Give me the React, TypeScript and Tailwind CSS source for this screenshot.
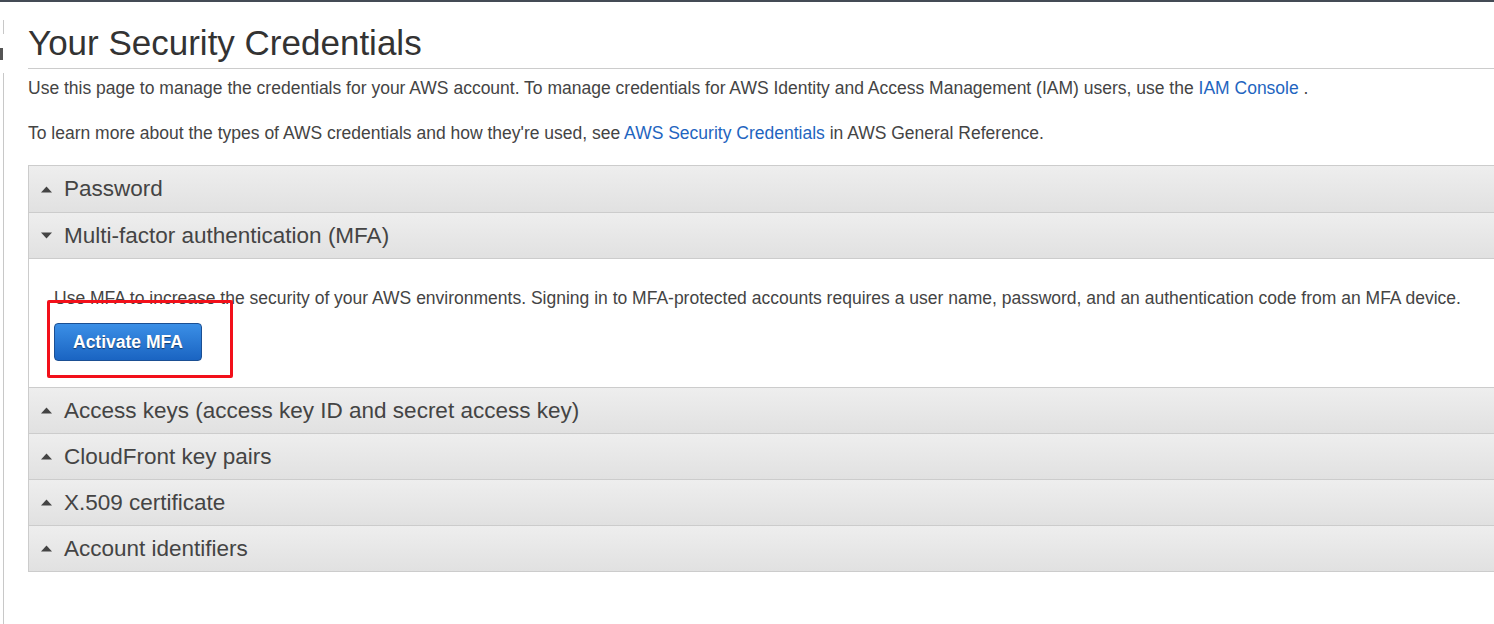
import React from 'react'

const sections = [
  { title: 'Password', open: false },
  { title: 'Multi-factor authentication (MFA)', open: true },
  { title: 'Access keys (access key ID and secret access key)', open: false },
  { title: 'CloudFront key pairs', open: false },
  { title: 'X.509 certificate', open: false },
  { title: 'Account identifiers', open: false },
]

function Caret({ open }: { open: boolean }) {
  return (
    <svg width="11" height="7" viewBox="0 0 11 7" className="shrink-0" aria-hidden="true">
      {open ? <polygon points="0,0.5 11,0.5 5.5,6.5" fill="#444" /> : <polygon points="0,6.5 11,6.5 5.5,0.5" fill="#444" />}
    </svg>
  )
}

export default function App() {
  return (
    <div
      className="w-[1494px] h-[624px] overflow-hidden bg-white border-t-2 border-[#444b55] flex text-[#444]"
      style={{ fontFamily: '"Liberation Sans", Arial, sans-serif' }}
    >
      {/* collapsed side panel edge */}
      <div className="w-[4px] shrink-0 flex flex-col pt-[18px]">
        <div className="h-[14px] border-r border-[#c8c8c8]" />
        <div className="mt-[14px] h-[12px] w-[3px] bg-[#555]" />
        <div className="mt-[13px] flex-1 border-r border-[#c8c8c8]" />
      </div>

      <div className="flex-1 min-w-0 pl-[24px]">
        <h1 className="text-[35px] leading-[40px] pt-[21px] pb-[5px] border-b border-[#cccccc] text-[#333]">
          Your Security Credentials
        </h1>
        <p className="text-[17.5px] leading-[20px] mt-[9px]">
          Use this page to manage the credentials for your AWS account. To manage credentials for AWS Identity and Access Management (IAM) users, use the{' '}
          <a className="text-[#1f65c0]">IAM Console</a> .
        </p>
        <p className="text-[17.5px] leading-[20px] mt-[25px]">
          To learn more about the types of AWS credentials and how they're used, see{' '}
          <a className="text-[#1f65c0]">AWS Security Credentials</a> in AWS General Reference.
        </p>

        <div className="mt-[22px] w-[1480px] border border-[#cccccc]">
          {sections.map((s, i) => (
            <div key={s.title} className={i > 0 ? 'border-t border-[#cccccc]' : ''}>
              <div
                className={`${i === 0 ? 'h-[46px]' : 'h-[45px]'} flex items-center gap-[12px] pl-[12px] bg-gradient-to-b from-[#eeeeee] to-[#e1e1e1]`}
              >
                <Caret open={s.open} />
                <span className="text-[22.5px] leading-[26px] text-[#444]">{s.title}</span>
              </div>
              {s.open && (
                <div className="relative border-t border-[#cccccc] bg-white pl-[25px] pt-[29px] h-[129px]">
                  <p className="text-[17.5px] leading-[20px]">
                    Use MFA to increase the security of your AWS environments. Signing in to MFA-protected accounts requires a user name, password, and an authentication code from an MFA device.
                  </p>
                  <button className="mt-[15px] h-[38px] px-[18px] rounded-[4px] border border-[#1b4f93] bg-gradient-to-b from-[#3b8fe6] to-[#1a64c2] text-white font-bold text-[17.5px] [text-shadow:0_1px_1px_rgba(0,0,0,0.5)]">
                    Activate MFA
                  </button>
                  <div className="absolute left-[18px] top-[41px] w-[186px] h-[78px] border-[3px] border-[#f2101a] rounded-[2px]" />
                </div>
              )}
            </div>
          ))}
        </div>
      </div>
    </div>
  )
}
